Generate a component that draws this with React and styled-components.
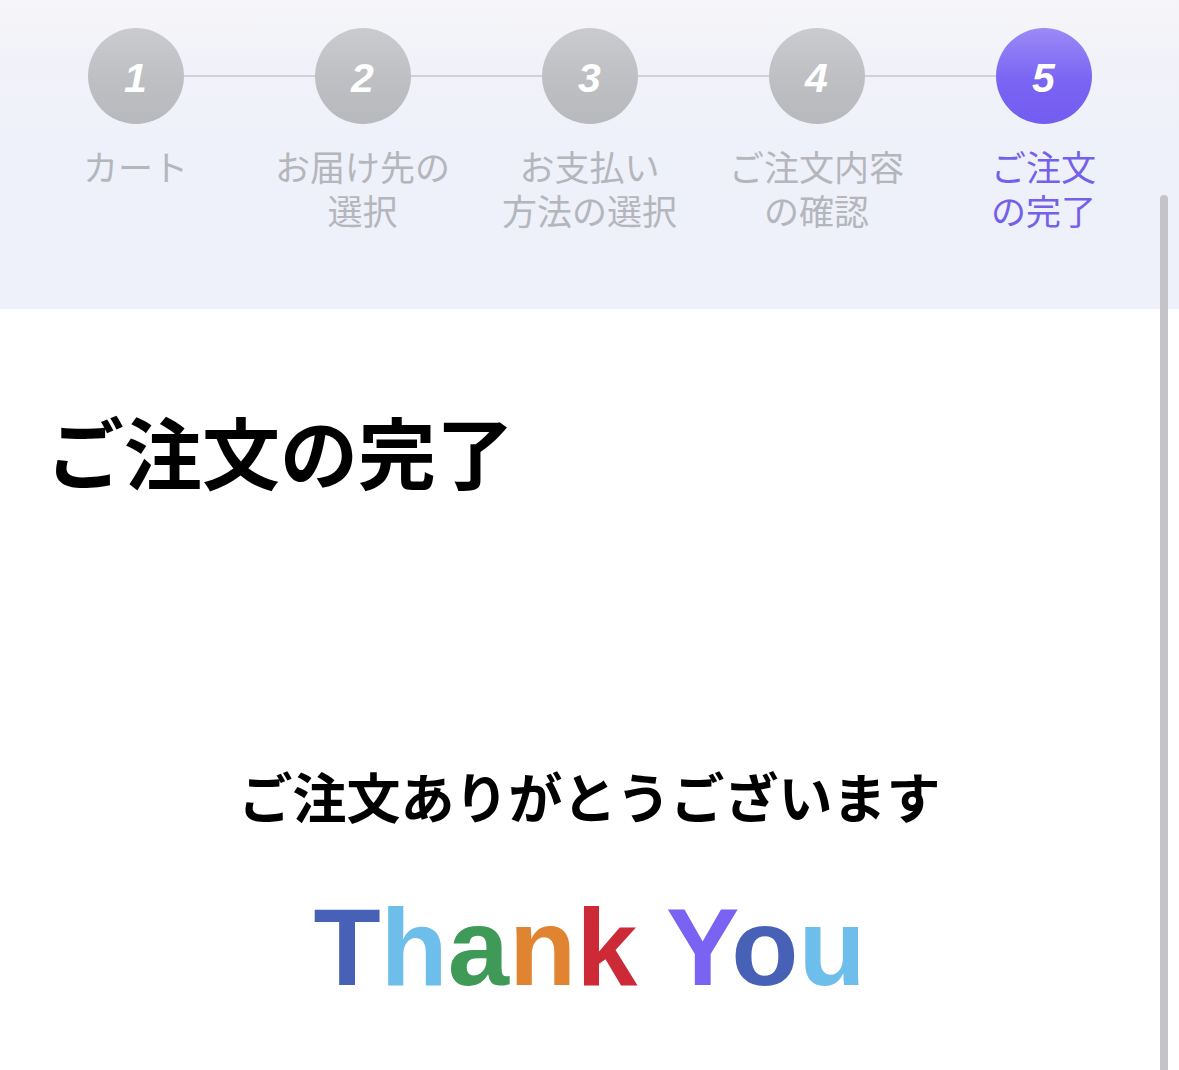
import React from 'react';
import styled, { createGlobalStyle, css } from 'styled-components';

const GlobalStyle = createGlobalStyle`
  html, body {
    margin: 0;
    padding: 0;
    background: #ffffff;
  }
  body {
    font-family: "Noto Sans CJK JP", "Noto Sans", sans-serif;
  }
`;

const Page = styled.div`
  min-height: 1070px;
  background: #ffffff;
`;

const StepHeader = styled.div`
  height: 309px;
  box-sizing: border-box;
  padding: 28px 22px 0;
  background: linear-gradient(180deg, #f6f6f9 0px, #f1f2f9 60px, #eff1fa 140px, #eff1fa 100%);
`;

const StepList = styled.ol`
  list-style: none;
  margin: 0;
  padding: 0;
  display: grid;
  grid-template-columns: repeat(5, 227px);
`;

const Step = styled.li`
  position: relative;
  display: flex;
  flex-direction: column;
  align-items: center;

  /* connector to next step */
  ${(p) => !p.$last && css`
    &::after {
      content: '';
      position: absolute;
      top: 47px;
      left: 50%;
      width: 227px;
      height: 2px;
      background: #cfd1da;
      z-index: 0;
    }
  `}
`;

const Circle = styled.div`
  position: relative;
  z-index: 1;
  width: 96px;
  height: 96px;
  box-sizing: border-box;
  padding-top: 4px;
  border-radius: 50%;
  display: flex;
  align-items: center;
  justify-content: center;
  color: #ffffff;
  font-family: "Liberation Sans", Arial, sans-serif;
  font-weight: 700;
  font-style: italic;
  font-size: 41px;
  background: ${(p) =>
    p.$active
      ? 'linear-gradient(180deg, #9b8af6 0%, #7a64f3 55%, #735cf1 100%)'
      : 'linear-gradient(180deg, #cacbce 0%, #bdbfc2 55%, #b7b9bd 100%)'};
`;

const Label = styled.div`
  margin-top: 20px;
  font-size: 35px;
  line-height: 44px;
  font-weight: 400;
  text-align: center;
  color: ${(p) => (p.$active ? '#7560ea' : '#b4b6bc')};
`;

const Content = styled.main`
  padding: 102px 46px 0;
`;

const Title = styled.h1`
  margin: 0;
  font-size: 78px;
  line-height: 78px;
  font-weight: 700;
  color: #000000;
`;

const Message = styled.p`
  margin: 277px 0 0;
  text-align: center;
  font-size: 54px;
  line-height: 60px;
  font-weight: 700;
  color: #000000;
`;

const ThankYou = styled.div`
  margin-top: 66px;
  text-align: center;
  font-family: "Liberation Sans", Arial, sans-serif;
  font-weight: 700;
  font-size: 110px;
  line-height: 110px;
`;

const Letter = styled.span`
  color: ${(p) => p.$color};
`;

const ScrollIndicator = styled.div`
  position: fixed;
  top: 195px;
  bottom: 0;
  right: 11px;
  width: 8px;
  border-radius: 4px 4px 0 0;
  background: #c4c4c8;
`;

const steps = [
  { n: 1, label: ['カート'] },
  { n: 2, label: ['お届け先の', '選択'] },
  { n: 3, label: ['お支払い', '方法の選択'] },
  { n: 4, label: ['ご注文内容', 'の確認'] },
  { n: 5, label: ['ご注文', 'の完了'] },
];

const current = 5;

const thankLetters = [
  ['T', '#4661b6'],
  ['h', '#6dbeeb'],
  ['a', '#3e9a56'],
  ['n', '#e08431'],
  ['k', '#cc2a36'],
  [' ', 'transparent'],
  ['Y', '#7a63f2'],
  ['o', '#4661b6'],
  ['u', '#6dbeeb'],
];

const App = () => {
  return (
    <Page>
      <GlobalStyle />
      <StepHeader>
        <StepList>
          {steps.map((s, i) => (
            <Step key={s.n} $last={i === steps.length - 1}>
              <Circle $active={s.n === current}>{s.n}</Circle>
              <Label $active={s.n === current}>
                {s.label.map((line) => (
                  <div key={line}>{line}</div>
                ))}
              </Label>
            </Step>
          ))}
        </StepList>
      </StepHeader>
      <Content>
        <Title>ご注文の完了</Title>
        <Message>ご注文ありがとうございます</Message>
        <ThankYou>
          {thankLetters.map(([ch, color], i) => (
            <Letter key={i} $color={color}>{ch}</Letter>
          ))}
        </ThankYou>
      </Content>
      <ScrollIndicator />
    </Page>
  );
};

export default App;
